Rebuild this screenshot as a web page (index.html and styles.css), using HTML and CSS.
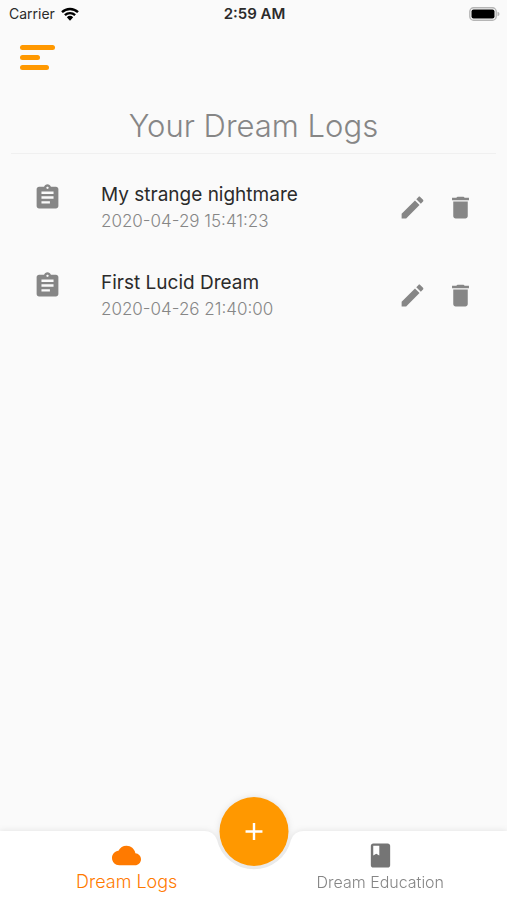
FILE: index.html
```html
<!DOCTYPE html>
<html lang="en">
<head>
    <meta charset="utf-8">
    <meta name="viewport" content="width=device-width, initial-scale=1">
    <title>Dream Logs</title>
    <link rel="stylesheet" href="styles.css">
</head>
<body>
    <div class="status-bar">
        <div class="carrier">
            <span>Carrier</span>
            <svg class="wifi" viewBox="0 0 18 14" aria-hidden="true">
                <path d="M1 5.2a11.6 11.6 0 0 1 16 0M3.9 8.2a7.4 7.4 0 0 1 10.2 0" fill="none" stroke="#000" stroke-width="2.4"/>
                <path d="M5.800 10.300a4.700 4.700 0 0 1 6.400 0L9 13.800z"/>
            </svg>
        </div>
        <span class="clock">2:59 AM</span>
        <svg class="battery" viewBox="0 0 31 14" aria-hidden="true">
            <rect x="0.800" y="0.800" width="26.400" height="12.400" rx="3.800" fill="#fafafa" stroke="#b5b5b5" stroke-width="1.400"/>
            <rect x="2.500" y="2.500" width="23" height="9" rx="2"/>
            <path d="M28.500 4.800q2 .5 2 2.200t-2 2.200z" fill="#b5b5b5"/>
        </svg>
    </div>

    <header>
        <button class="menu" aria-label="Menu">
            <span class="line"></span>
            <span class="line short"></span>
            <span class="line medium"></span>
        </button>
    </header>

    <main>
        <h1>Your Dream Logs</h1>
        <ul class="logs">
            <li class="log">
                <svg class="icon clipboard" viewBox="0 0 24 24" aria-hidden="true"><path d="M19 3h-4.180C14.400 1.840 13.300 1 12 1c-1.300 0-2.400.84-2.820 2H5c-1.100 0-2 .9-2 2v14c0 1.100.9 2 2 2h14c1.100 0 2-.9 2-2V5c0-1.100-.9-2-2-2zm-7 0c.55 0 1 .45 1 1s-.45 1-1 1-1-.45-1-1 .45-1 1-1zm2 14H7v-2h7v2zm3-4H7v-2h10v2zm0-4H7V7h10v2z"/></svg>
                <div class="info">
                    <h2>My strange nightmare</h2>
                    <time datetime="2020-04-29T15:41:23">2020-04-29 15:41:23</time>
                </div>
                <div class="actions">
                    <button aria-label="Edit My strange nightmare">
                        <svg class="icon" viewBox="0 0 24 24"><path d="M3 17.250V21h3.750L17.810 9.940l-3.750-3.750L3 17.250zM20.710 7.040c.39-.39.39-1.020 0-1.410l-2.340-2.340c-.39-.39-1.020-.39-1.410 0l-1.830 1.830 3.750 3.750 1.830-1.830z"/></svg>
                    </button>
                    <button aria-label="Delete My strange nightmare">
                        <svg class="icon" viewBox="0 0 24 24"><path d="M6 19c0 1.100.9 2 2 2h8c1.100 0 2-.9 2-2V7H6v12zM19 4h-3.500l-1-1h-5l-1 1H5v2h14V4z"/></svg>
                    </button>
                </div>
            </li>
            <li class="log">
                <svg class="icon clipboard" viewBox="0 0 24 24" aria-hidden="true"><path d="M19 3h-4.180C14.400 1.840 13.300 1 12 1c-1.300 0-2.400.84-2.820 2H5c-1.100 0-2 .9-2 2v14c0 1.100.9 2 2 2h14c1.100 0 2-.9 2-2V5c0-1.100-.9-2-2-2zm-7 0c.55 0 1 .45 1 1s-.45 1-1 1-1-.45-1-1 .45-1 1-1zm2 14H7v-2h7v2zm3-4H7v-2h10v2zm0-4H7V7h10v2z"/></svg>
                <div class="info">
                    <h2>First Lucid Dream</h2>
                    <time datetime="2020-04-26T21:40:00">2020-04-26 21:40:00</time>
                </div>
                <div class="actions">
                    <button aria-label="Edit First Lucid Dream">
                        <svg class="icon" viewBox="0 0 24 24"><path d="M3 17.250V21h3.750L17.810 9.940l-3.750-3.750L3 17.250zM20.710 7.040c.39-.39.39-1.020 0-1.410l-2.340-2.340c-.39-.39-1.020-.39-1.410 0l-1.830 1.830 3.750 3.750 1.830-1.830z"/></svg>
                    </button>
                    <button aria-label="Delete First Lucid Dream">
                        <svg class="icon" viewBox="0 0 24 24"><path d="M6 19c0 1.100.9 2 2 2h8c1.100 0 2-.9 2-2V7H6v12zM19 4h-3.500l-1-1h-5l-1 1H5v2h14V4z"/></svg>
                    </button>
                </div>
            </li>
        </ul>
    </main>

    <nav class="tabs">
        <a class="tab left active" href="#logs">
            <svg class="icon" viewBox="0 0 24 24" aria-hidden="true"><path d="M19.350 10.040C18.670 6.590 15.640 4 12 4 9.110 4 6.600 5.640 5.350 8.040 2.340 8.360 0 10.910 0 14c0 3.310 2.690 6 6 6h13c2.760 0 5-2.240 5-5 0-2.640-2.050-4.780-4.650-4.960z"/></svg>
            <span>Dream Logs</span>
        </a>
        <div class="notch">
            <svg class="cutout" viewBox="0 0 122 69" preserveAspectRatio="none" aria-hidden="true"><path d="M0 0H11Q21 0 24 9A38 38 0 0 0 98 9Q101 0 111 0H122V69H0Z"/></svg>
            <button class="add" aria-label="Add dream log">
                <svg viewBox="0 0 24 24"><path d="M19 13h-6v6h-2v-6H5v-2h6V5h2v6h6v2z"/></svg>
            </button>
        </div>
        <a class="tab right" href="#education">
            <svg class="icon" viewBox="0 0 24 24" aria-hidden="true"><path d="M18 2H6c-1.100 0-2 .9-2 2v16c0 1.100.9 2 2 2h12c1.100 0 2-.9 2-2V4c0-1.100-.9-2-2-2zM6 4h5v8l-2.500-1.500L6 12V4z"/></svg>
            <span>Dream Education</span>
        </a>
    </nav>
</body>
</html>
```
FILE: styles.css
```css
:root {
    --bg: #fafafa;
    --bar: #ffffff;
    --text: #2b2b2b;
    --muted: #868686;
    --line: #f0f0f0;
    --orange: #ff9800;
    --active: #ff7a00;
}

* {
    box-sizing: border-box;
}

body {
    background-color: var(--bg);
    color: var(--text);
    font-family: Inter, "Liberation Sans", sans-serif;
    display: flex;
    flex-direction: column;
    margin: 0;
    min-height: 100vh;
}

button {
    background: none;
    border: none;
    padding: 0;
    cursor: pointer;
}

svg {
    display: block;
}

.icon {
    width: 29px;
    height: 29px;
    fill: var(--muted);
}

.status-bar {
    display: grid;
    grid-template-columns: 1fr auto 1fr;
    align-items: center;
    height: 27px;
    padding: 0 7px 0 9px;
    font-size: 14px;
}

.carrier {
    display: flex;
    align-items: center;
    gap: 6px;
}

.wifi {
    width: 18px;
    height: 14px;
}

.clock {
    font-size: 15px;
    font-weight: 600;
}

.battery {
    width: 31px;
    height: 14px;
    justify-self: end;
}

header {
    padding: 18px 20px 16px;
}

.menu {
    display: flex;
    flex-direction: column;
    gap: 5px;
    width: 35px;
}

.line {
    width: 100%;
    height: 5px;
    border-radius: 3px;
    background-color: var(--orange);
}

.short {
    width: 20px;
}

.medium {
    width: 29px;
}

main {
    flex: 1;
    padding: 0 11px;
}

h1 {
    margin: 0;
    padding: 20px 0 7px;
    border-bottom: 1px solid var(--line);
    color: var(--muted);
    font-size: 31px;
    font-weight: 300;
    line-height: 40px;
    text-align: center;
}

.logs {
    list-style: none;
    margin: 0;
    padding: 9px 21px 0 22px;
}

.log {
    display: flex;
    align-items: center;
    height: 88px;
}

.clipboard {
    align-self: flex-start;
    margin-top: 20px;
}

.info {
    flex: 1;
    margin-left: 39px;
    padding-top: 2px;
}

h2 {
    margin: 0;
    font-size: 19px;
    font-weight: 400;
    line-height: 26px;
}

time {
    display: block;
    color: var(--muted);
    font-size: 17px;
    font-weight: 300;
    line-height: 26px;
}

.actions {
    display: flex;
    gap: 19px;
}

.tabs {
    position: sticky;
    bottom: 0;
    display: grid;
    grid-template-columns: 1fr 120px 1fr;
    height: 69px;
    filter: drop-shadow(0 0 3px rgba(0, 0, 0, 0.1));
}

.tab {
    display: flex;
    flex-direction: column;
    align-items: center;
    padding-top: 10px;
    background-color: var(--bar);
    color: var(--muted);
    font-size: 16px;
    font-weight: 300;
    line-height: 24px;
    text-decoration: none;
    white-space: nowrap;
}

/* labels are centred on each half of the bar, under the notch too */
.left {
    margin-right: -60px;
    clip-path: inset(0 60px 0 0);
}

.right {
    margin-left: -60px;
    clip-path: inset(0 0 0 60px);
}

.tab .icon {
    fill: #757575;
}

.active {
    color: var(--active);
    font-size: 18px;
}

.active .icon {
    fill: var(--active);
}

.notch {
    position: relative;
    z-index: 1;
}

/* 1px overlap on both sides hides the joins with the tabs */
.cutout {
    width: calc(100% + 2px);
    height: 100%;
    margin: 0 -1px;
    fill: var(--bar);
}

.add {
    position: absolute;
    top: -34px;
    left: 50%;
    transform: translateX(-50%);
    display: flex;
    align-items: center;
    justify-content: center;
    width: 69px;
    height: 69px;
    border-radius: 50%;
    background-color: var(--orange);
}

.add svg {
    width: 29px;
    height: 29px;
    fill: var(--bar);
}
```
